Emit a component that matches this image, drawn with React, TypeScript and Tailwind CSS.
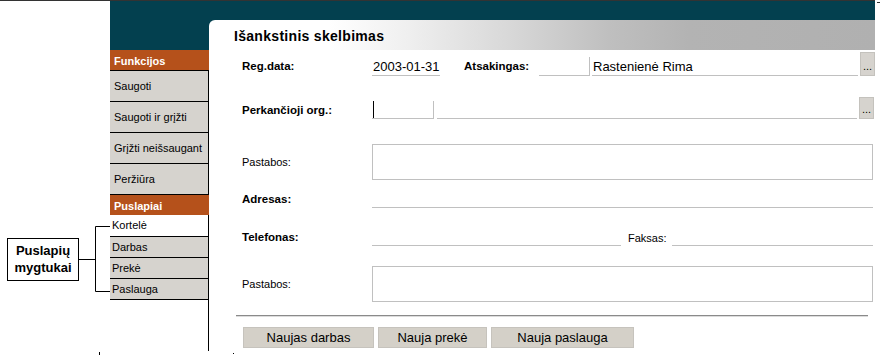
const font = { fontFamily: '"Liberation Sans", Arial, sans-serif' };

function SideButton({ label }: { label: string }) {
  return (
    <div className="flex h-[31px] items-center border-b border-r border-black bg-[#d6d3ce] pl-[4px] text-[11px] text-black">
      {label}
    </div>
  );
}

function PageButton({ label, white }: { label: string; white?: boolean }) {
  return (
    <div
      className={
        white
          ? 'flex h-[22px] items-center border-b border-r border-black bg-white pl-[2px] text-[11px] text-black'
          : 'flex h-[21px] items-center border-b border-r border-black bg-[#d6d3ce] pl-[2px] text-[11px] text-black'
      }
    >
      {label}
    </div>
  );
}

function DotsButton() {
  return (
    <div className="flex h-full w-[15px] items-end justify-center border border-[#c4c2bd] bg-[#d6d3ce] pb-[3px] text-[11px] leading-none text-black">
      ...
    </div>
  );
}

function Sidebar() {
  return (
    <div className="flex w-[99px] flex-col">
      <div className="h-[49px] bg-[#03404f]" />
      <div className="flex h-[21px] items-center border-b border-black bg-[#b5511b] pl-[4px] pt-[3px] text-[11px] font-bold text-white">
        Funkcijos
      </div>
      <SideButton label="Saugoti" />
      <SideButton label="Saugoti ir grįžti" />
      <SideButton label="Grįžti neišsaugant" />
      <SideButton label="Peržiūra" />
      <div className="flex h-[20px] items-center bg-[#b5511b] pl-[4px] pt-[3px] text-[11px] font-bold text-white">
        Puslapiai
      </div>
      <PageButton label="Kortelė" white />
      <PageButton label="Darbas" />
      <PageButton label="Prekė" />
      <PageButton label="Paslauga" />
      <div className="h-[51px] border-r border-black" />
    </div>
  );
}

function Annotation() {
  return (
    <div className="flex w-[110px] flex-col">
      <div className="h-[225px]" />
      <div className="flex h-[66px] items-center">
        <div className="ml-[7px] flex h-[43px] w-[72px] flex-col items-center justify-center border border-black text-[13px] font-bold leading-[17px] text-black">
          <span>Puslapių</span>
          <span>mygtukai</span>
        </div>
        <svg width="31" height="66" viewBox="0 0 31 66" className="block">
          <path d="M0 33.5H16.5M16.5 0.5V65.5M16.5 0.5H31M16.5 65.5H31" stroke="#000" strokeWidth="1" fill="none" />
        </svg>
      </div>
      <div className="h-[60px]" />
      <div className="ml-[99px] h-[4px] w-px bg-black" />
    </div>
  );
}

function Label({ text, bold, w = 'w-[130px]', pt = '' }: { text: string; bold?: boolean; w?: string; pt?: string }) {
  return (
    <div className={`${w} ${pt} shrink-0 ${bold ? 'text-[11.5px] font-bold' : 'text-[11px]'} text-black`}>{text}</div>
  );
}

function Main() {
  return (
    <div className="flex w-[671px] flex-col">
      <div className="w-[666px] bg-[#03404f]">
        <div className="h-[19px]" />
        <div className="flex h-[30px] items-center rounded-tl-[6px] bg-[linear-gradient(90deg,#ffffff_0%,#ffffff_18%,#efefef_30%,#d8d8d8_45%,#bfbfbf_60%,#b3b3b3_72%,#b0b0b0_100%)] pl-[25px] pt-[2px] text-[14px] font-bold tracking-[0.3px] text-black">
          Išankstinis skelbimas
        </div>
      </div>

      {/* Reg.data / Atsakingas */}
      <div className="mt-[2px] flex h-[24px] items-center pl-[33px]">
        <Label text="Reg.data:" bold pt="pt-[5px]" />
        <div className="flex h-full w-[68px] items-end border-b border-[#c0c0c0] pb-[1px] pl-px text-[13px] leading-[15px] text-black">
          2003-01-31
        </div>
        <Label text="Atsakingas:" bold w="ml-[24px] w-[75px]" pt="pt-[5px]" />
        <div className="mt-[5px] h-[19px] w-[51px] border-b border-r border-[#c0c0c0]" />
        <div className="ml-[2px] flex h-full w-[266px] items-end border-b border-[#c0c0c0] pb-[1px] pl-px text-[13px] leading-[15px] text-black">
          Rastenienė Rima
        </div>
        <div className="ml-[2px] h-full">
          <DotsButton />
        </div>
      </div>

      {/* Perkančioji org. */}
      <div className="mt-[21px] flex h-[22px] items-center pl-[33px]">
        <Label text="Perkančioji org.:" bold pt="pt-[6px]" />
        <div className="mt-[4px] flex h-[18px] w-[62px] items-stretch border-b border-r border-[#c0c0c0] pl-px">
          <div className="w-px bg-black" />
        </div>
        <div className="ml-[3px] h-full w-[420px] border-b border-[#c0c0c0]" />
        <div className="ml-[2px] h-full">
          <DotsButton />
        </div>
      </div>

      {/* Pastabos */}
      <div className="mt-[25px] flex h-[36px] items-center pl-[33px]">
        <Label text="Pastabos:" />
        <div className="h-full w-[501px] border border-[#c0c0c0]" />
      </div>

      {/* Adresas */}
      <div className="mt-[8px] flex h-[20px] items-center pl-[33px]">
        <Label text="Adresas:" bold pt="pt-[3px]" />
        <div className="h-full w-[501px] border-b border-[#c0c0c0]" />
      </div>

      {/* Telefonas / Faksas */}
      <div className="mt-[18px] flex h-[20px] items-center pl-[33px]">
        <Label text="Telefonas:" bold pt="pt-[3px]" />
        <div className="h-full w-[249px] border-b border-[#c0c0c0]" />
        <Label text="Faksas:" w="ml-[7px] w-[44px]" pt="pt-[4px]" />
        <div className="h-full w-[201px] border-b border-[#c0c0c0]" />
      </div>

      {/* Pastabos */}
      <div className="mt-[20px] flex h-[36px] items-center pl-[33px]">
        <Label text="Pastabos:" />
        <div className="h-full w-[501px] border border-[#c0c0c0]" />
      </div>

      <div className="ml-[27px] mt-[13px] h-[2px] w-[632px] border-b border-t border-b-[#dcdcdc] border-t-[#8a8a8a]" />

      <div className="ml-[34px] mt-[10px] flex gap-[4px]">
        {[
          ['Naujas darbas', 'w-[131px]'],
          ['Nauja prekė', 'w-[109px]'],
          ['Nauja paslauga', 'w-[143px]'],
        ].map(([t, w]) => (
          <div
            key={t}
            className={`${w} flex h-[21px] items-center justify-center border border-[#c6c3bd] bg-[#d4d0c8] text-[13px] text-black`}
          >
            {t}
          </div>
        ))}
      </div>
      <div className="ml-[24px] mt-[5px] h-px w-px bg-black" />
    </div>
  );
}

export default function App() {
  return (
    <div className="h-[355px] w-[880px] overflow-hidden bg-white" style={font}>
      <div className="flex h-px items-start">
        <div className="h-px w-[875px] bg-[#333333]" />
        <div className="ml-[2px] mt-[2px] h-px w-[3px] shrink-0 bg-[#333333]" />
      </div>
      <div className="flex">
        <Annotation />
        <Sidebar />
        <Main />
      </div>
    </div>
  );
}
